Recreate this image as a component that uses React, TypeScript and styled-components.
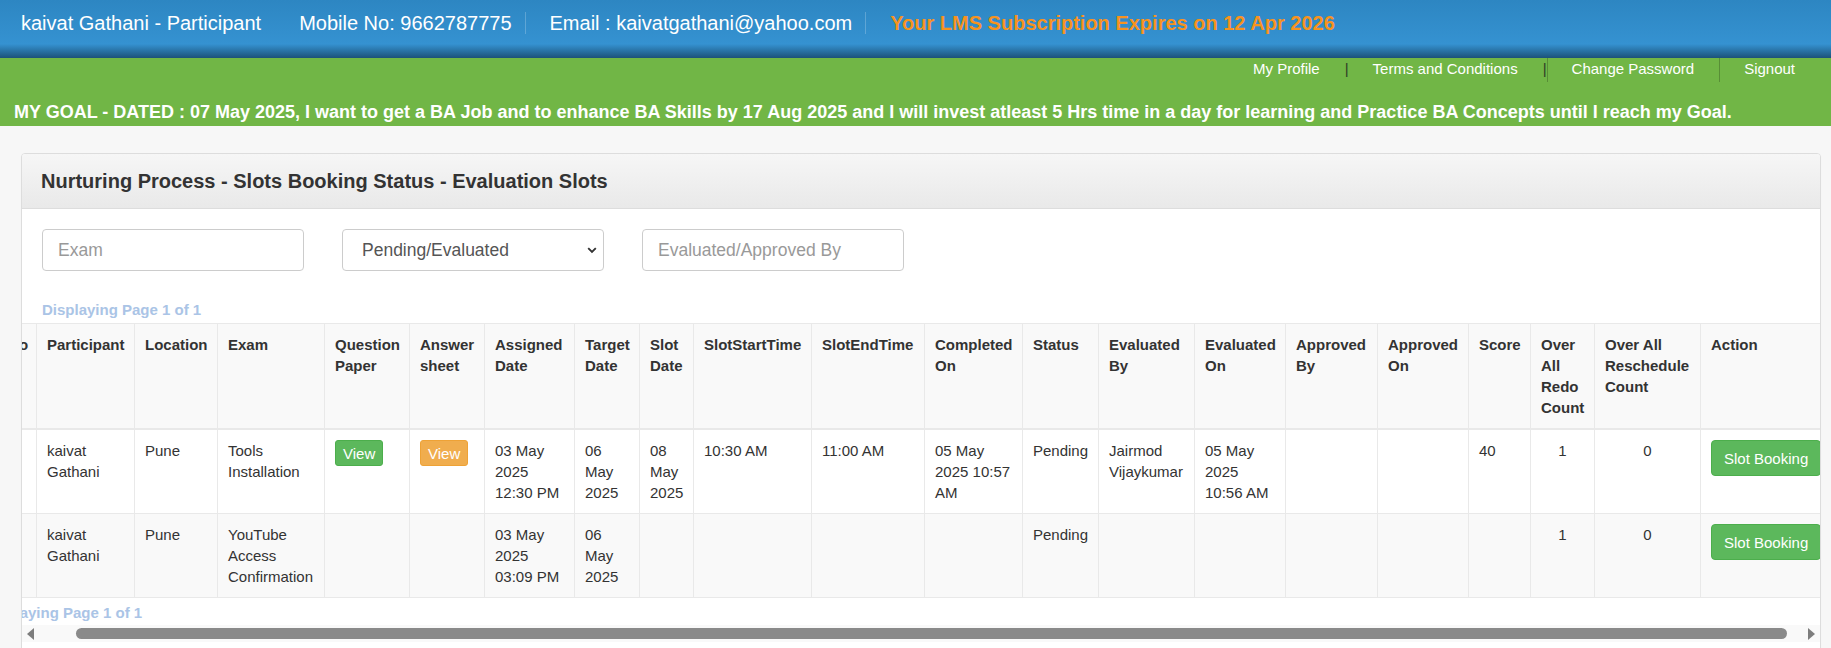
import React, { useLayoutEffect, useRef, useState } from "react";
import styled, { createGlobalStyle } from "styled-components";

const GlobalStyle = createGlobalStyle`
  * { box-sizing: border-box; }
  html, body { margin: 0; padding: 0; }
  body {
    font-family: "Liberation Sans", Arial, Helvetica, sans-serif;
    background: #f7f7f7;
    color: #333;
  }
`;

interface Column {
  label: string;
  width: number;
  center?: boolean;
}

type Cell = string | { button: "green" | "orange"; text: string };

const columns: Column[] = [
  { label: "S.No", width: 53 },
  { label: "Participant", width: 98 },
  { label: "Location", width: 83 },
  { label: "Exam", width: 107 },
  { label: "Question Paper", width: 85 },
  { label: "Answer sheet", width: 75 },
  { label: "Assigned Date", width: 90 },
  { label: "Target Date", width: 65 },
  { label: "Slot Date", width: 54 },
  { label: "SlotStartTime", width: 118 },
  { label: "SlotEndTime", width: 113 },
  { label: "Completed On", width: 98 },
  { label: "Status", width: 76 },
  { label: "Evaluated By", width: 96 },
  { label: "Evaluated On", width: 91 },
  { label: "Approved By", width: 92 },
  { label: "Approved On", width: 91 },
  { label: "Score", width: 62 },
  { label: "Over All Redo Count", width: 64, center: true },
  { label: "Over All Reschedule Count", width: 106, center: true },
  { label: "Action", width: 136 },
];

const rows: Cell[][] = [
  [
    "1",
    "kaivat Gathani",
    "Pune",
    "Tools Installation",
    { button: "green", text: "View" },
    { button: "orange", text: "View" },
    "03 May 2025 12:30 PM",
    "06 May 2025",
    "08 May 2025",
    "10:30 AM",
    "11:00 AM",
    "05 May 2025 10:57 AM",
    "Pending",
    "Jairmod Vijaykumar",
    "05 May 2025 10:56 AM",
    "",
    "",
    "40",
    "1",
    "0",
    "",
  ],
  [
    "2",
    "kaivat Gathani",
    "Pune",
    "YouTube Access Confirmation",
    "",
    "",
    "03 May 2025 03:09 PM",
    "06 May 2025",
    "",
    "",
    "",
    "",
    "Pending",
    "",
    "",
    "",
    "",
    "",
    "1",
    "0",
    "",
  ],
];

const tableWidth = columns.reduce((sum, c) => sum + c.width, 0);

const App: React.FC = () => {
  const scrollRef = useRef<HTMLDivElement>(null);
  const thumbAreaRef = useRef<HTMLDivElement>(null);
  const [thumb, setThumb] = useState({ left: 0, width: 0 });

  useLayoutEffect(() => {
    const el = scrollRef.current;
    const area = thumbAreaRef.current;
    if (!el || !area) return;
    el.scrollLeft = 39;
    const span = area.clientWidth;
    setThumb({
      left: (el.scrollLeft / el.scrollWidth) * span,
      width: (el.clientWidth / el.scrollWidth) * span,
    });
  }, []);

  return (
    <>
      <GlobalStyle />
      <TopBar>
        <InfoItem $gap={38}>kaivat Gathani - Participant</InfoItem>
        <InfoItem $divider>Mobile No: 9662787775</InfoItem>
        <InfoItem $divider>Email : kaivatgathani@yahoo.com</InfoItem>
        <InfoItem $accent>Your LMS Subscription Expires on 12 Apr 2026</InfoItem>
      </TopBar>

      <GoalBand>
        <NavLinks>
          <NavLink>My Profile</NavLink>
          <Pipe>|</Pipe>
          <NavLink>Terms and Conditions</NavLink>
          <Pipe>|</Pipe>
          <NavLink $divider>Change Password</NavLink>
          <NavLink $divider>Signout</NavLink>
        </NavLinks>
        <GoalText>
          MY GOAL - DATED : 07 May 2025, I want to get a BA Job and to enhance BA Skills by 17 Aug 2025 and I will
          invest atleast 5 Hrs time in a day for learning and Practice BA Concepts until I reach my Goal.
        </GoalText>
      </GoalBand>

      <Main>
        <Panel>
          <PanelHeading>
            <PanelTitle>Nurturing Process - Slots Booking Status - Evaluation Slots</PanelTitle>
          </PanelHeading>

          <Filters>
            <FilterRow>
              <TextInput placeholder="Exam" />
              <SelectWrap>
                <Select defaultValue="Pending/Evaluated">
                  <option>Pending/Evaluated</option>
                  <option>Pending</option>
                  <option>Evaluated</option>
                </Select>
                <Chevron width="10" height="7" viewBox="0 0 10 7">
                  <path d="M1.2 1.2 L5 5 L8.8 1.2" fill="none" stroke="#333" strokeWidth="1.9" />
                </Chevron>
              </SelectWrap>
              <TextInput placeholder="Evaluated/Approved By" />
            </FilterRow>
            <PageInfo>Displaying Page 1 of 1</PageInfo>
          </Filters>

          <TableScroll ref={scrollRef}>
            <Table style={{ width: tableWidth }}>
              <colgroup>
                {columns.map((c) => (
                  <col key={c.label} style={{ width: c.width }} />
                ))}
              </colgroup>
              <thead>
                <tr>
                  {columns.map((c) => (
                    <Th key={c.label}>{c.label}</Th>
                  ))}
                </tr>
              </thead>
              <tbody>
                {rows.map((row, ri) => (
                  <Tr key={ri} $striped={ri % 2 === 1}>
                    {row.map((cell, ci) => (
                      <Td key={ci} $center={columns[ci].center}>
                        {ci === columns.length - 1 ? (
                          <BookingButton>Slot Booking</BookingButton>
                        ) : typeof cell === "string" ? (
                          cell
                        ) : (
                          <SmallButton $tone={cell.button}>{cell.text}</SmallButton>
                        )}
                      </Td>
                    ))}
                  </Tr>
                ))}
              </tbody>
            </Table>
            <BottomPageInfo>Displaying Page 1 of 1</BottomPageInfo>
          </TableScroll>

          <ScrollBar>
            <ArrowButton>
              <Arrow $dir="left" />
            </ArrowButton>
            <ThumbArea ref={thumbAreaRef}>
              <Thumb style={{ left: thumb.left, width: thumb.width }} />
            </ThumbArea>
            <ArrowButton>
              <Arrow $dir="right" />
            </ArrowButton>
          </ScrollBar>
        </Panel>
      </Main>
    </>
  );
};

const TopBar = styled.header`
  height: 58px;
  display: flex;
  align-items: center;
  padding: 0 0 12px 21px;
  background: linear-gradient(
    to bottom,
    #2d86c2 0px,
    #3592d1 44px,
    #2a77ab 50px,
    #1c5279 58px
  );
`;

const InfoItem = styled.span<{ $divider?: boolean; $accent?: boolean; $gap?: number }>`
  font-size: 20px;
  line-height: 22px;
  white-space: nowrap;
  color: ${(p) => (p.$accent ? "#f7931e" : "#ffffff")};
  font-weight: ${(p) => (p.$accent ? 700 : 400)};
  margin-right: ${(p) => (p.$gap ? p.$gap : 24)}px;
  padding-right: ${(p) => (p.$divider ? 13 : 0)}px;
  border-right: ${(p) => (p.$divider ? "1px solid rgba(255, 255, 255, 0.22)" : "none")};
`;

const GoalBand = styled.section`
  background: #71b646;
  height: 68px;
  display: flex;
  flex-direction: column;
`;

const NavLinks = styled.nav`
  height: 24px;
  display: flex;
  justify-content: flex-end;
  align-items: stretch;
  padding-right: 11px;
`;

const NavLink = styled.a<{ $divider?: boolean }>`
  display: flex;
  align-items: center;
  padding: 0 25px 4px 24px;
  font-size: 15px;
  color: #ffffff;
  cursor: pointer;
  border-left: ${(p) => (p.$divider ? "1px solid rgba(0, 0, 0, 0.22)" : "none")};
`;

const Pipe = styled.span`
  display: flex;
  align-items: center;
  padding-bottom: 3px;
  font-size: 15px;
  color: #2f3b26;
`;

const GoalText = styled.p`
  margin: 0;
  padding: 19px 0 0 14px;
  font-size: 18px;
  line-height: 22px;
  font-weight: 700;
  color: #ffffff;
  white-space: nowrap;
`;

const Main = styled.main`
  padding: 27px 10px 0 21px;
`;

const Panel = styled.div`
  background: #ffffff;
  border: 1px solid #dddddd;
  border-radius: 4px;
  box-shadow: 0 1px 1px rgba(0, 0, 0, 0.05);
  overflow: hidden;
  padding-bottom: 20px;
`;

const PanelHeading = styled.div`
  height: 55px;
  display: flex;
  align-items: center;
  padding: 0 19px;
  background: linear-gradient(to bottom, #f6f6f6 0%, #e9e9e9 100%);
  border-bottom: 1px solid #dddddd;
`;

const PanelTitle = styled.h3`
  margin: 0;
  font-size: 20px;
  font-weight: 700;
  color: #333;
`;

const Filters = styled.div`
  padding: 20px 20px 0 20px;
`;

const FilterRow = styled.div`
  display: flex;
  gap: 38px;
`;

const TextInput = styled.input`
  width: 262px;
  height: 42px;
  padding: 0 15px;
  font-family: inherit;
  font-size: 17.5px;
  color: #555;
  border: 1px solid #cccccc;
  border-radius: 4px;
  background: #fff;
  outline: none;

  &::placeholder {
    color: #999;
  }
`;

const SelectWrap = styled.div`
  position: relative;
  width: 262px;
`;

const Select = styled.select`
  width: 100%;
  height: 42px;
  padding: 0 30px 0 19px;
  font-family: inherit;
  font-size: 17.5px;
  color: #555;
  border: 1px solid #cccccc;
  border-radius: 4px;
  background: #fff;
  appearance: none;
  outline: none;
`;

const Chevron = styled.svg`
  position: absolute;
  right: 7px;
  top: 18px;
  pointer-events: none;
`;

const PageInfo = styled.div`
  margin: 29px 0 3px;
  font-size: 15px;
  line-height: 20px;
  font-weight: 700;
  color: #aac4e6;
`;

const TableScroll = styled.div`
  overflow: hidden;
`;

const Table = styled.table`
  table-layout: fixed;
  border-collapse: collapse;
  font-size: 15px;
  line-height: 21px;
  color: #333;
`;

const Th = styled.th`
  padding: 10px;
  text-align: left;
  vertical-align: top;
  font-weight: 700;
  background: #f9f9f9;
  border: 1px solid #e9e9e9;
  border-bottom-width: 2px;
`;

const Tr = styled.tr<{ $striped?: boolean }>`
  background: ${(p) => (p.$striped ? "#f9f9f9" : "#ffffff")};
`;

const Td = styled.td<{ $center?: boolean }>`
  padding: 10px;
  vertical-align: top;
  text-align: ${(p) => (p.$center ? "center" : "left")};
  border: 1px solid #e9e9e9;
`;

const SmallButton = styled.button<{ $tone: "green" | "orange" }>`
  height: 26px;
  padding: 0 7px;
  font-family: inherit;
  font-size: 15px;
  color: #fff;
  border-radius: 3px;
  cursor: pointer;
  background: ${(p) => (p.$tone === "green" ? "#5cb85c" : "#f0ad4e")};
  border: 1px solid ${(p) => (p.$tone === "green" ? "#4cae4c" : "#eea236")};
`;

const BookingButton = styled.button`
  height: 36px;
  padding: 0 12px;
  font-family: inherit;
  font-size: 15px;
  white-space: nowrap;
  color: #fff;
  background: #5cb85c;
  border: 1px solid #4cae4c;
  border-radius: 4px;
  cursor: pointer;
`;

const BottomPageInfo = styled.div`
  margin: 5px 0 2px;
  font-size: 15px;
  line-height: 20px;
  font-weight: 700;
  color: #aac4e6;
`;

const ScrollBar = styled.div`
  height: 17px;
  display: flex;
  background: #f9f9f9;
`;

const ArrowButton = styled.div`
  width: 17px;
  flex: none;
  display: flex;
  align-items: center;
  justify-content: center;
`;

const Arrow = styled.span<{ $dir: "left" | "right" }>`
  width: 0;
  height: 0;
  border-top: 6px solid transparent;
  border-bottom: 6px solid transparent;
  border-${(p) => (p.$dir === "left" ? "right" : "left")}: 7px solid #7d7d7d;
`;

const ThumbArea = styled.div`
  flex: 1;
  position: relative;
`;

const Thumb = styled.div`
  position: absolute;
  top: 3px;
  height: 11px;
  border-radius: 6px;
  background: #8a8a8a;
`;

export default App;
